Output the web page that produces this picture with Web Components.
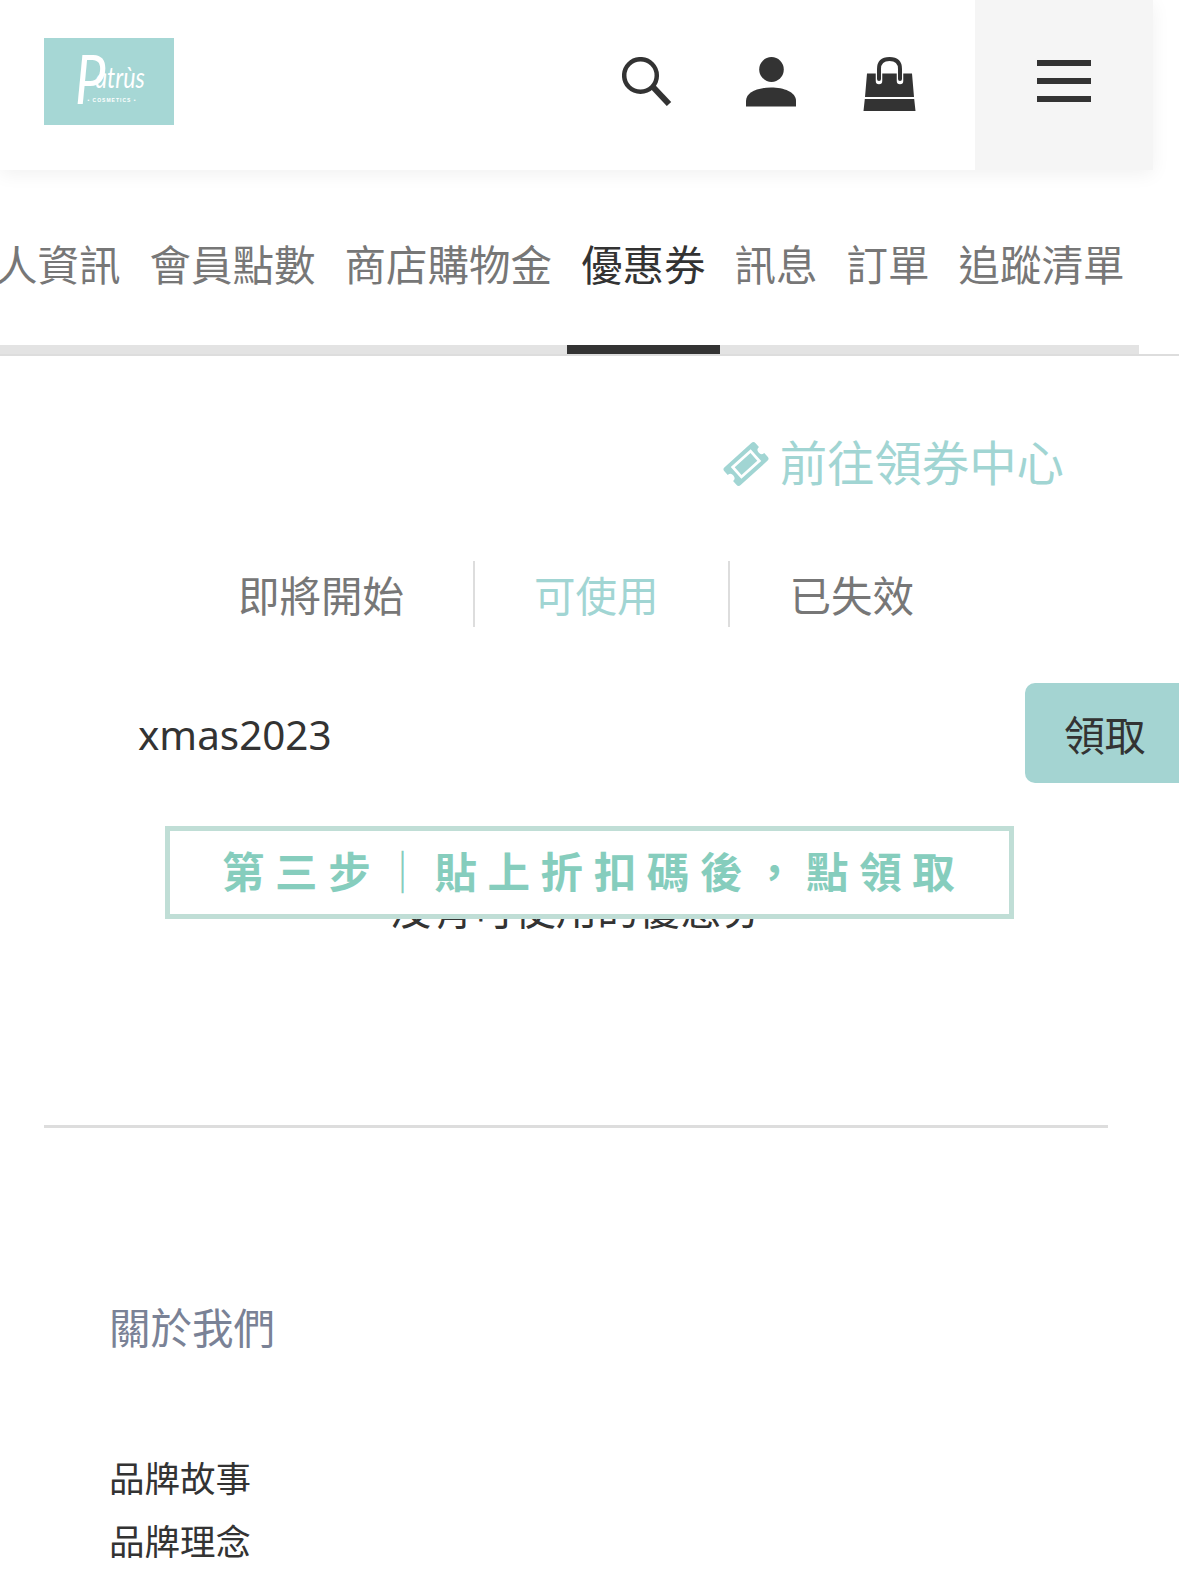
<!DOCTYPE html>
<html lang="zh-Hant">
<head>
<meta charset="utf-8">
<title>優惠券</title>
<style>
html, body { margin: 0; padding: 0; background: #fff; }
body {
  width: 1179px; height: 1572px; overflow: hidden;
  font-family: "Noto Sans CJK TC", "Noto Sans", sans-serif;
  font-weight: 400;
}
</style>
</head>
<body>
<site-header></site-header>
<account-tabs>
  <tab-item>個人資訊</tab-item>
  <tab-item>會員點數</tab-item>
  <tab-item>商店購物金</tab-item>
  <tab-item active>優惠券</tab-item>
  <tab-item>訊息</tab-item>
  <tab-item>訂單</tab-item>
  <tab-item>追蹤清單</tab-item>
</account-tabs>
<coupon-link>前往領券中心</coupon-link>
<status-tabs>
  <status-tab>即將開始</status-tab>
  <status-tab active>可使用</status-tab>
  <status-tab>已失效</status-tab>
</status-tabs>
<coupon-form code="xmas2023" label="領取"></coupon-form>
<coupon-empty>
  沒有可使用的優惠券
  <step-banner slot="over">第三步｜貼上折扣碼後，點領取</step-banner>
</coupon-empty>
<site-footer title-text="關於我們">
  <span>品牌故事</span>
  <span>品牌理念</span>
</site-footer>

<script>
"use strict";

function define(name, html) {
  customElements.define(name, class extends HTMLElement {
    constructor() {
      super();
      this.attachShadow({ mode: 'open' });
    }
    connectedCallback() {
      this.shadowRoot.innerHTML = typeof html === 'function' ? html(this) : html;
    }
  });
}

define('site-header', `
<style>
:host { display: flex; width: 1153px; height: 170px; background: #fff; box-shadow: 0 4px 18px rgba(0,0,0,.06); position: relative; }
.logo { margin: 38px 0 0 44px; width: 130px; height: 87px; display: block; }
.icons { display: flex; align-items: flex-start; margin-left: 448px; width: 353px; padding-top: 57px; }
.icons svg { display: block; }
.search { margin-right: 74px; }
.user { margin-right: 67px; }
.menu { width: 178px; height: 170px; background: #f5f5f5; display: flex; flex-direction: column; gap: 12px; padding: 60px 0 0 62px; box-sizing: border-box; }
.menu i { display: block; width: 54px; height: 6px; background: #333; }
</style>
<svg class="logo" viewBox="0 0 130 87">
  <rect width="130" height="87" fill="#a6d7d5"/>
  <text transform="translate(31 66) scale(.8 1)" fill="#fff" font-family="Lato, Inter, sans-serif" font-style="italic" font-weight="400"><tspan font-size="68">P</tspan><tspan dx="-13" dy="-16" font-size="29">atrùs</tspan></text>
  <text x="68" y="64" font-family="Liberation Sans" font-size="5" font-weight="700" fill="#fff" text-anchor="middle" letter-spacing="1">• COSMETICS •</text>
</svg>
<div class="icons">
  <svg class="search" width="50" height="49" viewBox="0 0 50 49" fill="none" stroke="#333">
    <circle cx="18.500" cy="18.500" r="16.300" stroke-width="4.500"/>
    <path d="M31 30 L47 47" stroke-width="6"/>
  </svg>
  <svg class="user" width="50" height="50" viewBox="0 0 50 50" fill="#333">
    <ellipse cx="25.500" cy="12.500" rx="12.300" ry="12.500"/>
    <path d="M0 49.500 V44 C0 35 12 30.500 25 30.500 C38 30.500 50 35 50 44 V49.500 Z"/>
  </svg>
  <svg class="bag" width="53" height="55" viewBox="0 0 53 55">
    <path d="M4 16.500 H49 L51 40 H2 Z M1.800 42 H51.200 L52.500 54 H.5 Z" fill="#333"/>
    <path d="M16 24 V12 C16 5 20 2 26.500 2 C33 2 37 5 37 12 V24" fill="none" stroke="#fff" stroke-width="6.500" stroke-linecap="round"/>
    <path d="M16 22 V12 C16 5 20 2 26.500 2 C33 2 37 5 37 12 V22" fill="none" stroke="#333" stroke-width="4" stroke-linecap="round"/>
  </svg>
</div>
<div class="menu"><i></i><i></i><i></i></div>
`);

define('account-tabs', `
<style>
:host { display: block; height: 186px; overflow: hidden; }
.strip { display: flex; width: 1202px; margin-left: -60px; height: 184px; }
.line { height: 2px; background: #ddd; }
</style>
<div class="strip"><slot></slot></div>
<div class="line"></div>
`);

define('tab-item', el => `
<style>
:host { display: flex; align-items: flex-start; box-sizing: border-box; height: 184px; padding: 62px 14.500px 0;
  font-size: 41.500px; line-height: 62px; white-space: nowrap; color: ${el.hasAttribute('active') ? '#333' : '#777'};
  border-bottom: 9px solid ${el.hasAttribute('active') ? '#333' : '#e3e3e3'}; }
</style>
<slot></slot>
`);

define('coupon-link', `
<style>
:host { display: flex; justify-content: flex-end; align-items: center; gap: 11px; height: 70px; margin-top: 70px; padding-right: 115px;
  font-size: 47.400px; line-height: 70px; color: #a1d5d3; }
svg { display: block; margin-top: 6px; }
</style>
<svg width="46" height="46" viewBox="0 0 46 46">
  <g transform="rotate(-42 23 23)">
    <path d="M5 11 H41 A3 3 0 0 1 44 14 V19 A4 4 0 0 0 44 27 V32 A3 3 0 0 1 41 35 H5 A3 3 0 0 1 2 32 V27 A4 4 0 0 0 2 19 V14 A3 3 0 0 1 5 11 Z" fill="#a1d5d3"/>
    <rect x="11" y="16.500" width="24" height="13" fill="#a1d5d3" stroke="#fff" stroke-width="2.800"/>
  </g>
</svg>
<slot></slot>
`);

define('status-tabs', `
<style>
:host { display: flex; height: 66px; margin: 65px 0 0 204px; }
</style>
<slot></slot>
`);

define('status-tab', el => `
<style>
:host { display: block; box-sizing: border-box; padding: 0 62px 0 34px; height: 66px; font-size: 41.500px; line-height: 66px; white-space: nowrap;
  color: ${el.hasAttribute('active') ? '#a1d5d3' : '#777'}; }
:host(:not(:last-child)) { border-right: 2px solid #ddd; }
:host(:first-child) { padding: 0 69px 0 34px; }
:host([active]) { padding: 0 69px 0 59px; }
:host(:last-child) { padding-left: 60px; }
</style>
<slot></slot>
`);

define('coupon-form', el => `
<style>
:host { display: flex; justify-content: space-between; height: 100px; margin-top: 56px; overflow: hidden; }
.code { padding: 0 0 0 138px; font-family: "Noto Sans", sans-serif; font-weight: 400; font-size: 40.400px; line-height: 104px; color: #333; }
.btn { box-sizing: border-box; width: 170px; margin-right: -16px; height: 100px; background: #a4d4d2; border-radius: 10px; padding-left: 39px;
  font-size: 40.800px; line-height: 102px; color: #333; }
</style>
<div class="code">${el.getAttribute('code')}</div>
<div class="btn">${el.getAttribute('label')}</div>
`);

define('coupon-empty', `
<style>
:host { display: block; position: relative; height: 342px; box-sizing: border-box; padding-top: 94px; text-align: center; padding-right: 26px;
  font-size: 41.500px; line-height: 60px; color: #333; }
:host::after { content: ""; position: absolute; left: 44px; width: 1064px; top: 342px; height: 3px; background: #ddd; }
</style>
<slot></slot>
<slot name="over"></slot>
`);

define('step-banner', `
<style>
:host { display: block; position: absolute; left: 165px; top: 43px; box-sizing: border-box; width: 849px; height: 93px;
  border: 5px solid #c0ded6; background: #fff; text-align: left; padding-left: 52px; white-space: nowrap;
  font-size: 42.500px; font-weight: 600; line-height: 78px; letter-spacing: 10.600px; color: #86cdbd; }
</style>
<slot></slot>
`);

define('site-footer', el => `
<style>
:host { display: block; padding: 171px 0 0 109px; }
h3 { margin: 0 0 89px; font-size: 41.500px; line-height: 60px; font-weight: 400; color: #7a8296; }
.links { display: flex; flex-direction: column; font-size: 35.500px; line-height: 63px; color: #333; }
</style>
<h3>${el.getAttribute('title-text')}</h3>
<div class="links"><slot></slot></div>
`);
</script>
</body>
</html>
